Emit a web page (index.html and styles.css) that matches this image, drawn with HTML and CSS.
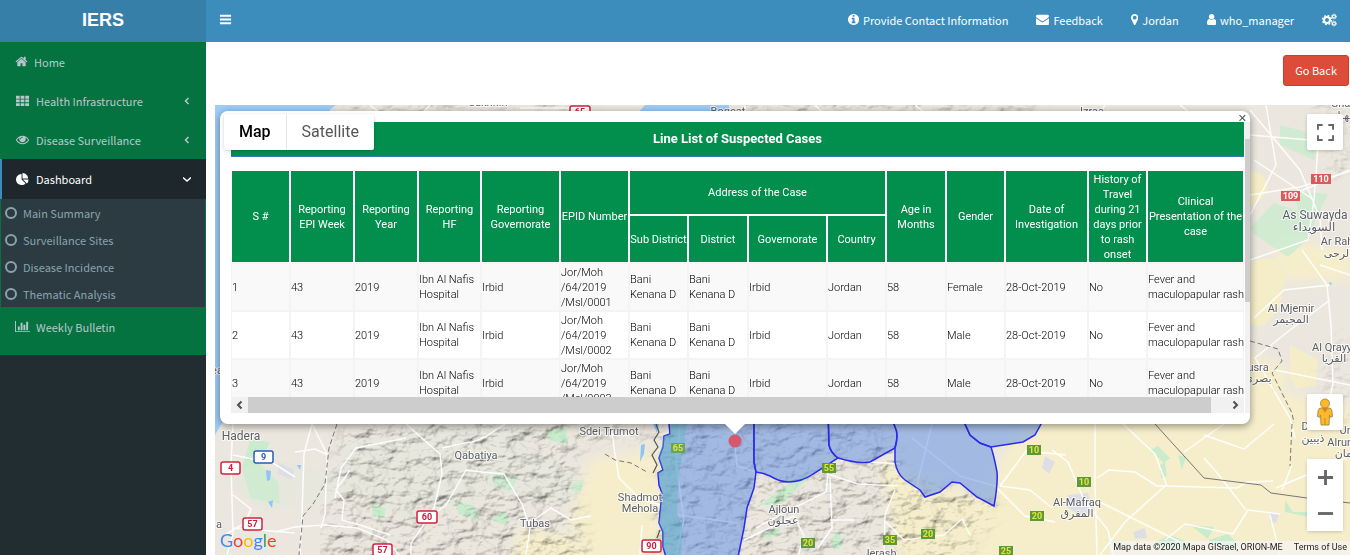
FILE: index.html
```
<!DOCTYPE html>
<html lang="en">
<head>
  <meta charset="UTF-8">
  <meta name="viewport" content="width=device-width, initial-scale=1.0">
  <title>IERS | Dashboard</title>
  <link rel="stylesheet" href="styles.css">
</head>
<body>
  <header class="header">
    <a href="#" class="logo">IERS</a>
    <nav class="navbar">
      <button class="toggle" aria-label="Toggle navigation">
        <svg class="icon" viewBox="0 0 14 14"><path d="M1 2h12v2H1zM1 6h12v2H1zM1 10h12v2H1z"/></svg>
      </button>
      <ul class="topmenu">
        <li><a href="#"><svg class="icon" viewBox="128 0 1536 1792"><path d="M1152 1376v-160q0-14-9-23t-23-9h-96v-512q0-14-9-23t-23-9h-320q-14 0-23 9t-9 23v160q0 14 9 23t23 9h96v320h-96q-14 0-23 9t-9 23v160q0 14 9 23t23 9h448q14 0 23-9t9-23zm-128-896v-160q0-14-9-23t-23-9h-192q-14 0-23 9t-9 23v160q0 14 9 23t23 9h192q14 0 23-9t9-23zm640 416q0 209-103 385.500t-279.500 279.500-385.500 103-385.500-103-279.500-279.500-103-385.500 103-385.500 279.500-279.500 385.500-103 385.500 103 279.500 279.500 103 385.500z"/></svg>Provide Contact Information</a></li>
        <li><a href="#"><svg class="icon" viewBox="0 0 1792 1792"><path d="M1792 710v794q0 66-47 113t-113 47h-1472q-66 0-113-47t-47-113v-794q44 49 101 87 362 246 497 345 57 42 92.500 65.500t94.500 48 110 24.500h2q51 0 110-24.500t94.500-48 92.500-65.500q170-123 498-345 57-39 100-87zm0-294q0 79-49 151t-122 123q-376 261-468 325-10 7-42.500 31t-54 38.500-52 32.500-57.500 27-50 9h-2q-23 0-50-9t-57.500-27-52-32.500-54-38.500-42.500-31q-91-64-262-182.500t-205-142.500q-62-42-117-115.500t-55-136.500q0-78 41.500-130t118.500-52h1472q65 0 112.500 47t47.500 113z"/></svg>Feedback</a></li>
        <li><a href="#"><svg class="icon" viewBox="384 0 1024 1792"><path d="M1152 640q0-106-75-181t-181-75-181 75-75 181 75 181 181 75 181-75 75-181zm256 0q0 109-33 179l-364 774q-16 33-47.500 52t-67.500 19-67.500-19-46.500-52l-365-774q-33-70-33-179 0-212 150-362t362-150 362 150 150 362z"/></svg>Jordan</a></li>
        <li><a href="#"><svg class="icon" viewBox="256 0 1280 1792"><path d="M1536 1399q0 109-62.500 187t-150.500 78h-854q-88 0-150.500-78t-62.500-187q0-85 8.500-160.500t31.500-152 58.500-131 94-89 134.500-34.500q131 128 313 128t313-128q76 0 134.500 34.500t94 89 58.500 131 31.500 152 8.500 160.500zm-256-887q0 159-112.500 271.500t-271.500 112.500-271.500-112.500-112.500-271.500 112.500-271.500 271.500-112.500 271.500 112.500 112.500 271.500z"/></svg>who_manager</a></li>
        <li><a href="#" aria-label="Settings"><svg class="icon cogs" viewBox="0 0 15 14">
          <circle cx="5" cy="7" r="3" stroke-width="2"/><circle cx="5" cy="7" r="4.500" stroke-width="1.400" stroke-dasharray="1.800 1.734"/>
          <circle cx="12" cy="3.500" r="1.500" stroke-width="1.200"/><circle cx="12" cy="3.500" r="2.400" stroke-width="1" stroke-dasharray="1.100 .785"/>
          <circle cx="12" cy="10.500" r="1.500" stroke-width="1.200"/><circle cx="12" cy="10.500" r="2.400" stroke-width="1" stroke-dasharray="1.100 .785"/>
        </svg></a></li>
      </ul>
    </nav>
  </header>

  <div class="wrapper">
    <aside class="sidebar">
      <ul class="menu">
        <li><a href="#" class="home"><svg class="icon" viewBox="64 0 1664 1792"><path d="M1472 992v480q0 26-19 45t-45 19h-384v-384h-256v384h-384q-26 0-45-19t-19-45v-480q0-1 .5-3t.5-3l575-474 575 474q1 2 1 6zm223-69l-62 74q-8 9-21 11h-3q-13 0-21-7l-692-577-692 577q-12 8-24 7-13-2-21-11l-62-74q-8-10-7-23.500t11-21.500l719-599q32-26 76-26t76 26l244 204v-195q0-14 9-23t23-9h192q14 0 23 9t9 23v408l219 182q10 8 11 21.500t-7 23.500z"/></svg>Home</a></li>
        <li><a href="#"><svg class="icon" viewBox="0 0 14 14"><path d="M0 2h4v3H0zM5 2h4v3H5zM10 2h4v3h-4zM0 6h4v3H0zM5 6h4v3H5zM10 6h4v3h-4zM0 10h4v3H0zM5 10h4v3H5zM10 10h4v3h-4z"/></svg>Health Infrastructure
          <svg class="arrow" viewBox="0 0 8 8"><path d="M5.500 1 2.500 4l3 3"/></svg></a></li>
        <li><a href="#"><svg class="icon" viewBox="0 0 1792 1792"><path d="M1664 960q-152-236-381-353 61 104 61 225 0 185-131.500 316.500t-316.500 131.500-316.500-131.500-131.500-316.500q0-121 61-225-229 117-381 353 133 205 333.500 326.500t434.500 121.500 434.500-121.500 333.500-326.500zm-720-384q0-20-14-34t-34-14q-125 0-214.500 89.500t-89.500 214.500q0 20 14 34t34 14 34-14 14-34q0-86 61-147t147-61q20 0 34-14t14-34zm848 384q0 34-20 69-140 230-376.500 368.500t-499.500 138.500-499.500-139-376.500-368q-20-35-20-69t20-69q140-229 376.500-368t499.500-139 499.500 139 376.500 368q20 35 20 69z"/></svg>Disease Surveillance
          <svg class="arrow" viewBox="0 0 8 8"><path d="M5.500 1 2.500 4l3 3"/></svg></a></li>
        <li class="active"><a href="#"><svg class="icon" viewBox="0 0 1792 1792"><path d="M768 890l546 546q-106 108-247.500 168t-298.500 60q-209 0-385.500-103t-279.500-279.500-103-385.500 103-385.500 279.500-279.500 385.500-103v762zm187 6h773q0 157-60 298.500t-168 247.500zm709-128h-768v-768q209 0 385.500 103t279.500 279.500 103 385.500z"/></svg>Dashboard
          <svg class="arrow" viewBox="0 0 8 8"><path d="M0 2.500l4 3.500 4-3.500"/></svg></a>
          <ul class="submenu">
            <li><a href="#"><i class="ring"></i>Main Summary</a></li>
            <li><a href="#"><i class="ring"></i>Surveillance Sites</a></li>
            <li><a href="#"><i class="ring"></i>Disease Incidence</a></li>
            <li><a href="#"><i class="ring"></i>Thematic Analysis</a></li>
          </ul>
        </li>
        <li><a href="#"><svg class="icon" viewBox="0 0 2048 1792"><path d="M640 896v512h-256v-512h256zm384-512v1024h-256v-1024h256zm1024 1152v128h-2048v-1536h128v1408h1920zm-640-896v768h-256v-768h256zm384-384v1152h-256v-1152h256z"/></svg>Weekly Bulletin</a></li>
      </ul>
    </aside>

    <main class="content">
      <div class="actions"><a href="#" class="btn-back">Go Back</a></div>

      <section class="map">
        <svg class="tiles" viewBox="215 105 1135 450" preserveAspectRatio="xMinYMin slice">
          <defs>
            <filter id="relief" x="0" y="0" width="1" height="1">
              <feTurbulence type="fractalNoise" baseFrequency=".05 .08" numOctaves="4" seed="8" result="n"/>
              <feDiffuseLighting in="n" surfaceScale="10" diffuseConstant="1.200" lighting-color="#fff" result="l"><feDistantLight azimuth="225" elevation="58"/></feDiffuseLighting>
              <feGaussianBlur in="SourceAlpha" stdDeviation="8" result="a"/>
              <feComposite in="l" in2="a" operator="in"/>
            </filter>
            <filter id="soft"><feGaussianBlur stdDeviation="6"/></filter>
          </defs>

          <!-- land and sea -->
          <rect x="215" y="105" width="1135" height="450" fill="#ebe7de"/>
          <path d="M215 105h121q-10 6-12 20l-80 290-22 8-7 12z" fill="#9ecdf9"/>
          <path d="M645 105h84v8h-91z" fill="#9ecdf9"/>
          <g filter="url(#soft)" fill="#f6eecb">
            <path d="M590 460l70-10v110h-70l-20-40zM880 460l100 40 50-90 240-20 90 20v160H900z"/>
            <path d="M520 530l50 5 30 30h-90zM1240 350l50 20-10 30-40-10zM1280 240l70 10v30h-80z"/>
          </g>
          <g fill="#f5ecc8">
            <path d="M1250 171q20 2 17 22l-17 16zM1250 262q28-10 36 10l-6 34-16 20-14-2zM1290 345l28 15-2 25-20 4-6-12z"/>
          </g>
          <g fill="#c9eccd">
            <path d="M1280 125l38 10-4 25-34-15zM1250 228l24-25 24 8-4-20 34 3-12 25-8 20-20 18-34-23z" opacity=".8"/>
            <path d="M250 440l20 2-10 22 18 18 2 22-30-6-8-30zM548 430l18-2 2 16-20-4zM492 472l26 6-8 14-16-6zM455 500l20 6 5 14-22-6zM372 504l14 4-2 10-12-2z"/>
            <path d="M570 484l14-4-4 12-8-1zM500 512l10 4-4 9-14-4zM1150 450l8-4 12 12-6 5zM1178 455l8 2-4 13zM1160 465l5-3 2 14-6 2zM1150 545l20-10 20 8-8 9zM1190 525l24 2-6 12zM1208 540l20-6 12 12-14 5zM1285 500l8 12 22 0-2 6-28-6zM1106 540l16 2 2 7z"/>
            <path d="M760 505l40-30 10 2-30 28zM762 535l16-8 3 6-14 6zM830 540l10-10 2 16-8 4z"/>
          </g>
          <path d="M215 474l60-14 60 12 10-30 60-10 10-10h130l-20 26 60 30-20 25-60-10-90 30-60-30-90 20z" fill="#dfe9dd" opacity=".35"/>
          <g fill="#8fc5f5"><path d="M266 470l5 1-1 9-3 1zM268 502l5-2-1 8zM297 465h4l-1 5zM641 445l4-1-1 10-4 8zM653 424h6l-2 9zM1329 282l3 1-2 3z"/></g>
          <g fill="#dedee6"><path d="M1068 495l20-2 6 18-14 4-14-8zM1045 456l10 6-6 12-7-6zM1133 532l12-4 2 10-12 1zM1270 512l9 2-3 9-6-1zM278 462l16 8-2 10-14-6z"/></g>

          <!-- hill shading -->
          <g class="relief" filter="url(#relief)">
            <path d="M346 420h300v20l-30-4-40 10v60l20 60H320l10-70zM660 420h220l30 60 90 20-40 60H660zM340 100h240l20 10H340zM740 100h300v12H740z"/>
            <path d="M1310 105h40v70h-20zM1325 340h25v80h-20z" opacity=".5"/>
          </g>

          <!-- roads -->
          <g class="roads">
            <path d="M233 424l-2 40 2 70-6 21M312 424l-8 30-2 60-2 41M312 424l15 30-2 60-4 14M233 455l40 8 22 14M233 495l18 14-6 14-20 12M275 532l20-5 30-2 32 3 30 12 12 15M295 452l20-3 13 6M233 528l62 5"/>
            <path d="M406 424l34 30 2 20-8 34-9 15M470 443l15-6 20-13M425 523l-14 20 0 12M442 448l18-4 10-2M466 470l16 2 22 2 18 30 8 24M466 470l-20 35-24 18M530 528l-4 27M531 522l20-14 20 12 20-4M350 470l-14 20 8 10-2 20 18 5 30 10M406 438l-50 10-15 20-6 30"/>
            <path d="M611 424l4 30 4 24 20 20 24 8M640 555l2-30M680 424l-4 40 8 56-8 35M678 515l60 8M735 446l2 20 20 6M756 528l30-16 40-20 2-18 30 10 40 2M830 478l2 50-14 20M744 540l50-24 10 20-6 20M830 520l24 0M895 490l-10 25-1 40M884 520l20 20 40-5 18-16 8 16M840 460l60 4"/>
            <path d="M912 438l48 38 35 10 30 30 30 6M932 424l-10 40-6 26M1000 486l30 4 22 18M1052 450l16 12 16 38 24 30 5 25M1000 486l26-35 40 4M1095 424v60l2 71M1097 478l12-8 26 2 22 14 10 0 70 2 10-6 26-1M1165 486l-40 36-25 33M1123 424l32 30 12 32M1100 502l80 40M1165 540l20-16 48 10 15-24 32 4M1246 510l-28-36-14-16M1184 452l40-28M1204 435l40 14 30-25M1270 515l10 40M1346 458l-70 30M1282 490l10-25"/>
            <path d="M1250 110l50 60 20 48 2 32M1250 195l50-8 50-16M1266 105l10 60-26 50M1320 120l-6 80-6 40-58 20M1314 200l-60-40M1350 170l-70 30M1302 250l25 35 4 40 2 60-8 30M1330 300l-40 30-35 28 35 60 5 20M1254 318l30-28 46-5M1275 370l75 15M1320 265l30 10M1250 135l60 5"/>
            <path d="M370 105l10 8M430 105l-8 8M520 108h50M745 105v8M815 105l8 8M915 105l10 8M1100 113l5-8M1180 105l10 8"/>
          </g>
          <g class="dashes">
            <path d="M337 424l-8 24-4 36-12 20-10 12-4 39M605 454l10 6 16 3 16 9M1250 341l28 8 4 12-10 12 20 40 2 10M1292 424l-2 42"/>
          </g>
          <path d="M1155 424l49 54 57 7 10 8 36 5 43 5" fill="none" stroke="#77757a"/>
          <path d="M656 424l3 8-5 8 4 7-6 8 5 10-4 8M660 530l-3 8" fill="none" stroke="#555" stroke-width="1.200"/>

          <!-- governorate districts -->
          <g class="district">
            <path d="M669 410v14l1 10-6 2-1 11-4 11 4 12-5 3 1 12 3 8-3 30 4 9v15l3 10h72l6-29 3-20 7-20 2-16-2-10v-52z"/>
            <path d="M754 410v52l2 10q8 1 14 4 10 6 18 6 14 0 25-8l25-16q-8-6-9-13l-1-35z"/>
            <path d="M828 410l1 35q2 8 9 13 20 6 32 4l25-14q4-14 0-21l-6-17z"/>
            <path d="M889 410l6 17q4 7 0 21v14q2 12 10 18l15 10 5 7 15-5 12-10 8 1 17 14 17 9q4-22 3-34-3-16-6-25l-11-4-10-8-5-11-2-14z"/>
            <path d="M963 410l2 14 5 11 10 8 11 4 32-5 12-7 6-11v-14z"/>
          </g>
          <path d="M671 424l16 0-8 50-2 40 6 14-2 27h-14l-4-8v-15l-4-9 3-30-4-20 5-3-4-12 5-22 6-2z" fill="#5fb3bf" opacity=".45"/>
          <circle cx="735" cy="441" r="6.500" fill="#d4596b"/>

          <!-- road shields -->
          <g class="shield red">
            <rect x="221" y="462" width="19" height="12" rx="2"/><text x="230.500" y="471">4</text>
            <rect x="243" y="518" width="19" height="12" rx="2"/><text x="252.500" y="527">57</text>
            <rect x="417" y="511" width="20" height="12" rx="2"/><text x="427" y="520">60</text>
            <rect x="373" y="544" width="19" height="12" rx="2"/><text x="382.500" y="553">57</text>
            <rect x="642" y="540" width="19" height="12" rx="2"/><text x="651.500" y="549">90</text>
            <rect x="570" y="106" width="20" height="12" rx="2"/><text x="580" y="115">65</text>
          </g>
          <g class="shield blue"><rect x="254" y="451" width="19" height="12" rx="2"/><text x="263.500" y="460">9</text></g>
          <g class="shield green">
            <rect x="671" y="443" width="14" height="10" opacity=".7"/><text x="678" y="451">65</text>
            <rect x="822" y="463" width="14" height="10"/><text x="829" y="471">55</text>
            <rect x="801" y="538" width="14" height="10"/><text x="808" y="546">20</text>
            <rect x="883" y="535" width="14" height="10"/><text x="890" y="543">35</text>
            <rect x="921" y="529" width="14" height="10"/><text x="928" y="537">20</text>
            <rect x="1027" y="445" width="14" height="10"/><text x="1034" y="453">10</text>
            <rect x="1077" y="477" width="14" height="10"/><text x="1084" y="485">10</text>
            <rect x="1030" y="511" width="14" height="10"/><text x="1037" y="519">20</text>
            <rect x="999" y="546" width="14" height="10"/><text x="1006" y="554">25</text>
          </g>
          <g class="shield solid">
            <rect x="1311" y="174" width="20" height="10"/><text x="1321" y="182">110</text>
            <rect x="1281" y="191" width="19" height="10"/><text x="1290.500" y="199">109</text>
          </g>

          <!-- places -->
          <g class="place big">
            <text x="241" y="440">Hadera</text>
            <text x="1315" y="219">As Suwayda</text>
            <text x="1314" y="231">السويداء</text>
          </g>
          <g class="place">
            <text x="476" y="459">Qabatiya</text>
            <text x="609" y="435">Sdei Trumot</text>
            <text x="535" y="527">Tubas</text>
            <text x="640" y="501">Shadmot</text>
            <text x="640" y="512">Mehola</text>
            <text x="784" y="513">Ajloun</text>
            <text x="783" y="524">عجلون</text>
            <text x="1077" y="506">Al-Mafraq</text>
            <text x="1077" y="517">المفرق</text>
            <text x="880" y="557">Jerash</text>
            <text x="219" y="528">a</text>
            <text x="217" y="374">ea</text>
            <text x="1291" y="312">Al Mjemir</text>
            <text x="1291" y="323">المجيمر</text>
            <text x="1335" y="351">Al Qrayya</text>
            <text x="1334" y="362">القريا</text>
            <text x="1258" y="371">usra</text>
            <text x="1258" y="382">بصرى</text>
            <text x="1340" y="245">Ar Raha</text>
            <text x="1338" y="257">الرحى</text>
            <text x="1305" y="430">D</text>
            <text x="1313" y="442">ذيبين</text>
            <text x="1348" y="434">Um</text>
            <text x="1348" y="446">Alruman</text>
            <text x="1346" y="457">رمان</text>
            <text x="1350" y="107">Shahba</text>
            <text x="1348" y="119">شهبا</text>
            <text x="488" y="106">Sakhnin</text>
            <text x="728" y="115">Boqeat</text>
            <text x="1092" y="115">Izraa</text>
          </g>
        </svg>

        <div class="infowindow">
          <button class="close" aria-label="Close">&#10005;</button>
          <div class="info-body">
            <div class="list">
              <h4 class="list-title">Line List of Suspected Cases</h4>
              <table class="cases">
                <colgroup>
                  <col class="w59"><col class="w64"><col class="w64"><col class="w63"><col class="w79"><col class="w69"><col class="w59"><col class="w60"><col class="w79"><col class="w59"><col class="w60"><col class="w59"><col class="w83"><col class="w59"><col class="w97">
                </colgroup>
                <thead>
                  <tr class="top">
                    <th rowspan="2">S #</th>
                    <th rowspan="2">Reporting EPI Week</th>
                    <th rowspan="2">Reporting Year</th>
                    <th rowspan="2">Reporting HF</th>
                    <th rowspan="2">Reporting Governorate</th>
                    <th rowspan="2">EPID Number</th>
                    <th colspan="4">Address of the Case</th>
                    <th rowspan="2">Age in Months</th>
                    <th rowspan="2">Gender</th>
                    <th rowspan="2">Date of Investigation</th>
                    <th rowspan="2">History of Travel during 21 days prior to rash onset</th>
                    <th rowspan="2">Clinical Presentation of the case</th>
                  </tr>
                  <tr class="sub">
                    <th>Sub District</th>
                    <th>District</th>
                    <th>Governorate</th>
                    <th>Country</th>
                  </tr>
                </thead>
                <tbody>
                  <tr>
                    <td>1</td><td>43</td><td>2019</td><td>Ibn Al Nafis Hospital</td><td>Irbid</td><td>Jor/Moh<br>/64/2019<br>/Msl/0001</td>
                    <td>Bani Kenana D</td><td>Bani Kenana D</td><td>Irbid</td><td>Jordan</td><td>58</td><td>Female</td><td>28-Oct-2019</td><td>No</td><td>Fever and maculopapular&nbsp;rash</td>
                  </tr>
                  <tr>
                    <td>2</td><td>43</td><td>2019</td><td>Ibn Al Nafis Hospital</td><td>Irbid</td><td>Jor/Moh<br>/64/2019<br>/Msl/0002</td>
                    <td>Bani Kenana D</td><td>Bani Kenana D</td><td>Irbid</td><td>Jordan</td><td>58</td><td>Male</td><td>28-Oct-2019</td><td>No</td><td>Fever and maculopapular&nbsp;rash</td>
                  </tr>
                  <tr>
                    <td>3</td><td>43</td><td>2019</td><td>Ibn Al Nafis Hospital</td><td>Irbid</td><td>Jor/Moh<br>/64/2019<br>/Msl/0003</td>
                    <td>Bani Kenana D</td><td>Bani Kenana D</td><td>Irbid</td><td>Jordan</td><td>58</td><td>Male</td><td>28-Oct-2019</td><td>No</td><td>Fever and maculopapular&nbsp;rash</td>
                  </tr>
                </tbody>
              </table>
            </div>
            <div class="vbar"><div class="vthumb"></div></div>
            <div class="hbar">
              <svg viewBox="0 0 17 16"><path d="M10.500 4.500 7 8l3.500 3.500"/></svg>
              <div class="hthumb"></div>
              <svg viewBox="0 0 17 16"><path d="M6.500 4.500 10 8l-3.500 3.500"/></svg>
            </div>
          </div>
          <div class="tail"></div>
        </div>

        <div class="maptype">
          <button class="on">Map</button>
          <button>Satellite</button>
        </div>

        <div class="controls">
          <button class="ctl full" aria-label="Toggle fullscreen view">
            <svg viewBox="0 0 18 18"><path d="M0 0v6h2V2h4V0zM16 0h-4v2h4v4h2V0zM16 16h-4v2h6v-6h-2zM2 12H0v6h6v-2H2z"/></svg>
          </button>
          <button class="ctl" aria-label="Street View">
            <svg class="pegman" viewBox="0 0 16 28">
              <path d="M4 10h8q2.500 0 2.800 2.500l.7 6-2 .8-1-2-.5 9.700H4l-.5-9.700-1 2-2-.8.700-6Q1.500 10 4 10z" fill="#fbb92c" stroke="#9a7a3c" stroke-width=".8"/>
              <path d="M5 10.500l3 4 3-4z" fill="#e47b28"/>
              <path d="M8 20v7" stroke="#c98a20"/>
              <circle cx="8" cy="5.500" r="4.500" fill="#fbb92c" stroke="#9a7a3c" stroke-width=".8"/>
            </svg>
          </button>
          <div class="zoom">
            <button class="ctl" aria-label="Zoom in"><svg viewBox="0 0 18 18"><path d="M7.500 1h3v6.500H17v3h-6.500V17h-3v-6.500H1v-3h6.500z"/></svg></button>
            <button class="ctl" aria-label="Zoom out"><svg viewBox="0 0 18 18"><path d="M1 7.500h16v3H1z"/></svg></button>
          </div>
        </div>

        <a href="#" class="google" aria-label="Google"><span class="b">G</span><span class="r">o</span><span class="y">o</span><span class="b">g</span><span class="g">l</span><span class="r">e</span></a>
        <div class="credits"><span>Map data ©2020 Mapa GISrael, ORION-ME</span><a href="#">Terms of Use</a></div>
      </section>
    </main>
  </div>
</body>
</html>
```
FILE: styles.css
```
* {
  box-sizing: border-box;
}

body {
  margin: 0;
  min-height: 100vh;
  display: flex;
  flex-direction: column;
  background: #fff;
  font-family: "Noto Sans CJK SC", "Open Sans", sans-serif;
  font-size: 11px;
  line-height: 16px;
}

ul {
  list-style: none;
  margin: 0;
  padding: 0;
}

a {
  color: inherit;
  text-decoration: none;
}

button {
  border: 0;
  padding: 0;
  background: none;
  color: inherit;
  font: inherit;
  cursor: pointer;
}

.icon {
  height: 13px;
  fill: currentColor;
  flex: none;
}

/* header */
.header {
  display: flex;
  height: 42px;
  color: #fff;
}

.logo {
  width: 206px;
  background: #367fa9;
  font: bold 18px/40px "Liberation Sans", Arial, sans-serif;
  text-align: center;
}

.navbar {
  flex: 1;
  display: flex;
  align-items: center;
  justify-content: space-between;
  background: #3c8dbc;
  padding: 0 13px 3px;
}

.toggle {
  display: flex;
}

.topmenu {
  display: flex;
  align-items: center;
  gap: 28px;
}

.topmenu a {
  display: flex;
  align-items: center;
  gap: 4px;
}

.cogs {
  height: 14px;
  fill: none;
  stroke: currentColor;
}

/* sidebar */
.wrapper {
  flex: 1;
  display: flex;
}

.sidebar {
  width: 206px;
  background: #222d32;
}

.menu {
  background: #05733f;
  color: #b8c7ce;
  padding-bottom: 9px;
}

.menu > li > a {
  display: flex;
  align-items: center;
  height: 39px;
  padding: 0 15px;
  gap: 6px;
}

.menu > li > a .icon {
  width: 15px;
}

.menu > li > .home .icon {
  width: 13px;
}

.arrow {
  width: 8px;
  height: 8px;
  margin-left: auto;
  fill: none;
  stroke: currentColor;
  stroke-width: 1.500;
}

.menu > .active > a {
  height: 40px;
  background: #1e282c;
  border-left: 2px solid #3c8dbc;
  padding-left: 13px;
  color: #fff;
}

.submenu {
  margin: 0 1px;
  background: #2c3b41;
  color: #8aa4af;
}

.submenu a {
  display: flex;
  align-items: center;
  gap: 6px;
  height: 27px;
  padding-left: 4px;
}

.ring {
  width: 12px;
  height: 12px;
  border: 2px solid #8aa4af;
  border-radius: 50%;
}

/* content */
.content {
  flex: 1;
  min-width: 0;
  display: flex;
  flex-direction: column;
}

.actions {
  display: flex;
  justify-content: flex-end;
  padding: 13px 1px 19px;
}

.btn-back {
  padding: 6px 11px;
  background: #dd4b39;
  border: 1px solid #d73925;
  border-radius: 3px;
  line-height: 17px;
  color: #fff;
}

.map {
  position: relative;
  flex: 1;
  min-height: 448px;
  margin-left: 9px;
  overflow: hidden;
  font-family: Roboto, Arial, sans-serif;
}

.tiles {
  position: absolute;
  width: 100%;
  height: 100%;
}

.relief {
  mix-blend-mode: multiply;
  opacity: .45;
}

.roads {
  fill: none;
  stroke: #fff;
  stroke-width: 1.500;
  opacity: .9;
}

.dashes {
  fill: none;
  stroke: #777;
  stroke-dasharray: 5 3;
}

.district {
  fill: #5a8ce6;
  fill-opacity: .5;
  stroke: #2b2be8;
  stroke-width: 1.500;
}

.shield {
  font-size: 9px;
  font-weight: bold;
  text-anchor: middle;
}

.red rect {
  fill: #fff;
  stroke: #d4213d;
  stroke-width: 1.500;
}

.red text {
  fill: #c8203c;
}

.blue rect {
  fill: #fff;
  stroke: #2a5db0;
  stroke-width: 1.500;
}

.blue text {
  fill: #2a5db0;
}

.green rect {
  fill: #5a9a3c;
}

.green text {
  fill: #e8e337;
}

.solid rect {
  fill: #dc5a5a;
}

.solid text {
  fill: #fff;
}

.place {
  font-family: Roboto, "DejaVu Sans", sans-serif;
  font-size: 11px;
  text-anchor: middle;
  fill: #5b5d63;
  stroke: #fff;
  stroke-width: 2;
  stroke-opacity: .7;
  paint-order: stroke;
}

.place.big {
  font-size: 12px;
}

/* info window */
.infowindow {
  position: absolute;
  left: 5px;
  right: 100px;
  top: 6px;
  padding: 11px 0 11px 11px;
  background: #fff;
  border-radius: 8px;
  box-shadow: 0 2px 7px 1px rgba(0, 0, 0, .35);
}

.close {
  position: absolute;
  top: 2px;
  right: 3px;
  font: 11px/12px "DejaVu Sans", sans-serif;
  color: #555;
}

.info-body {
  display: grid;
  grid-template-columns: 1fr 5px;
  column-gap: 1px;
}

.list {
  height: 275px;
  overflow: hidden;
}

.list-title {
  margin: 0 0 13px;
  background: #028f4d;
  border-bottom: 1px solid #337ab7;
  color: #fff;
  font-size: 13px;
  font-weight: 700;
  line-height: 34px;
  text-align: center;
}

.cases {
  width: 100%;
  table-layout: fixed;
  border-spacing: 0;
  font-size: 11px;
  line-height: 15px;
  font-weight: 300;
}

.w59 { width: 59px; }
.w60 { width: 60px; }
.w63 { width: 63px; }
.w64 { width: 64px; }
.w69 { width: 69px; }
.w79 { width: 79px; }
.w83 { width: 83px; }
.w97 { width: 97px; }

.cases th {
  padding: 0;
  border: 1px solid #fff;
  background: #028f4d;
  color: #fff;
  font-weight: 400;
}

.cases .top {
  height: 45px;
}

.cases .sub {
  height: 48px;
}

.cases td {
  height: 48px;
  padding: 0;
  border: 1px solid #f4f4f4;
  color: #000;
}

.cases tbody tr:nth-child(odd) {
  background: #f9f9f9;
}

.vbar {
  grid-row: span 2;
  padding: 17px 0 0;
  background: #f1f1f1;
}

.vthumb {
  height: 163px;
  background: #cdcdcd;
}

.hbar {
  display: flex;
  height: 16px;
  background: #f1f1f1;
}

.hbar svg {
  width: 17px;
  fill: none;
  stroke: #505050;
  stroke-width: 2;
}

.hthumb {
  flex: 1;
  margin-right: 16px;
  background: #cdcdcd;
}

.tail {
  position: absolute;
  left: 50%;
  top: 100%;
  margin-left: -10px;
  border: 10px solid transparent;
  border-top-color: #fff;
  border-bottom: 0;
}

/* map controls */
.maptype {
  position: absolute;
  left: 9px;
  top: 9px;
  display: flex;
  background: #fff;
  border-radius: 2px;
  box-shadow: 0 1px 4px -1px rgba(0, 0, 0, .3);
  font-size: 16px;
  line-height: 36px;
  color: #565656;
}

.maptype button {
  padding: 0 15px;
}

.maptype .on {
  color: #000;
  font-weight: 500;
  border-right: 1px solid #e6e6e6;
}

.controls {
  position: absolute;
  right: 7px;
  top: 9px;
  bottom: 24px;
  display: flex;
  flex-direction: column;
  gap: 29px;
}

.ctl {
  display: flex;
  align-items: center;
  justify-content: center;
  width: 36px;
  height: 36px;
  background: #fff;
  border-radius: 2px;
  box-shadow: 0 1px 4px -1px rgba(0, 0, 0, .3);
}

.ctl svg {
  width: 17px;
  fill: #666;
}

.ctl .pegman {
  width: 16px;
}

.full {
  margin-bottom: auto;
}

.zoom {
  background: #fff;
  box-shadow: 0 1px 4px -1px rgba(0, 0, 0, .3);
}

.zoom .ctl {
  box-shadow: none;
}

.google {
  position: absolute;
  left: 5px;
  bottom: 4px;
  font: 18px/22px Lato, sans-serif;
}

.google .b { color: #4285f4; }
.google .r { color: #ea4335; }
.google .y { color: #fbbc05; }
.google .g { color: #34a853; }

.credits {
  position: absolute;
  right: 0;
  bottom: 0;
  display: flex;
  gap: 11px;
  padding: 0 3px 1px;
  background: rgba(245, 245, 245, .7);
  font-size: 9px;
  line-height: 13px;
  color: #222;
}
```
